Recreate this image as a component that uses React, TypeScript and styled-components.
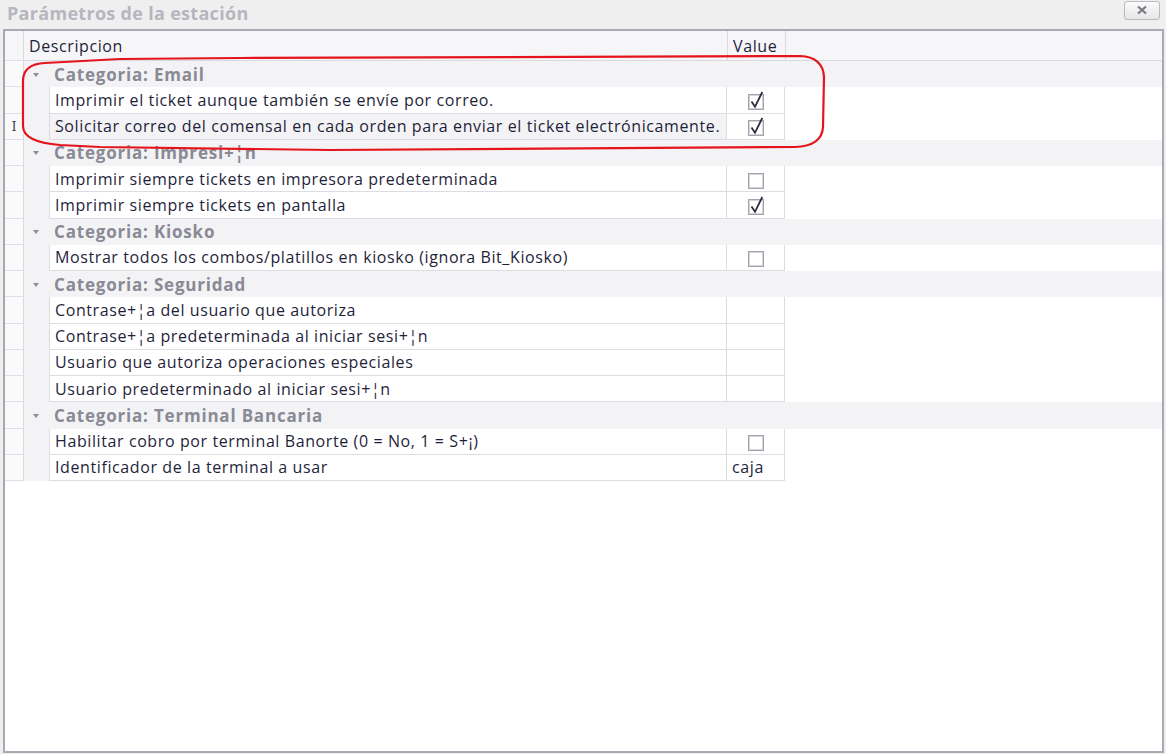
import React from "react";
import styled, { createGlobalStyle } from "styled-components";

const GlobalStyle = createGlobalStyle`
  html, body { margin: 0; padding: 0; }
  body {
    background: #f0f0f0;
    font-family: "Open Sans", "Noto Sans", sans-serif;
  }
`;

const Window = styled.div`
  width: 1166px;
  height: 754px;
  display: flex;
  flex-direction: column;
  background: #efeff0;
  box-sizing: border-box;
`;

const TitleBar = styled.div`
  height: 28px;
  flex: 0 0 28px;
  display: flex;
  align-items: center;
  justify-content: space-between;
  padding: 0 6px 0 7px;
`;

const Title = styled.div`
  font-weight: 700;
  font-size: 18px;
  color: #b6b6be;
  letter-spacing: 0.3px;
  margin-top: -3px;
`;

const CloseButton = styled.div`
  width: 34px;
  height: 17px;
  margin-top: -8px;
  border: 1px solid #b9b9c1;
  border-radius: 3px;
  background: linear-gradient(#fbfbfb, #e6e6e8);
  display: flex;
  align-items: center;
  justify-content: center;
`;

const Panel = styled.div`
  flex: 1;
  margin: 1px 2px 1px 3px;
  border: 2px solid #a9a9b5;
  background: #ffffff;
  position: relative;
  display: flex;
  flex-direction: column;
`;

const Row = styled.div<{ $h?: number }>`
  display: flex;
  height: ${(p) => p.$h ?? 26.25}px;
  flex: 0 0 auto;
`;

const Indicator = styled.div<{ $header?: boolean }>`
  width: 19px;
  flex: 0 0 19px;
  border-right: 1px solid #d9d9df;
  border-bottom: 1px solid #dfdfe4;
  background: ${(p) => (p.$header ? "#f6f6f8" : "#fafafb")};
  display: flex;
  align-items: center;
  justify-content: center;
  font-family: "DejaVu Serif", serif;
  font-size: 13px;
  color: #444;
  box-sizing: border-box;
`;

const HeaderCell = styled.div<{ $w?: number }>`
  width: ${(p) => (p.$w ? `${p.$w}px` : "auto")};
  flex: ${(p) => (p.$w ? `0 0 ${p.$w}px` : "1")};
  box-sizing: border-box;
  background: #f6f6f8;
  border-right: ${(p) => (p.$w ? "1px solid #d9d9df" : "none")};
  border-bottom: 1px solid #d9d9df;
  display: flex;
  align-items: center;
  padding-left: 5px;
  font-size: 16px;
  letter-spacing: 0.6px;
  color: #1f1f3a;
`;

const CategoryCell = styled.div`
  flex: 1;
  display: flex;
  align-items: center;
  background: #f3f3f5;
  padding-left: 9px;
  gap: 15px;
  font-weight: 700;
  font-size: 17px;
  letter-spacing: 0.8px;
  color: #8a8a95;
`;

const Caret = styled.span`
  width: 0;
  height: 0;
  border-left: 3.5px solid transparent;
  border-right: 3.5px solid transparent;
  border-top: 4px solid #8e8e98;
  margin-top: 1px;
`;

const Indent = styled.div`
  width: 25px;
  flex: 0 0 25px;
  background: #f3f3f5;
`;

const DescCell = styled.div<{ $focused?: boolean }>`
  width: 678px;
  flex: 0 0 678px;
  box-sizing: border-box;
  border-left: 1px solid #dcdce1;
  border-right: 1px solid #dcdce1;
  border-bottom: 1px solid #dcdce1;
  background: ${(p) => (p.$focused ? "#f3f3f5" : "#ffffff")};
  display: flex;
  align-items: center;
  padding-left: 5px;
  font-size: 16px;
  letter-spacing: 0.6px;
  color: #1f1f3a;
  white-space: nowrap;
  overflow: hidden;
`;

const ValueCell = styled.div<{ $text?: boolean }>`
  width: 58px;
  flex: 0 0 58px;
  box-sizing: border-box;
  border-right: 1px solid #dcdce1;
  border-bottom: 1px solid #dcdce1;
  background: #ffffff;
  display: flex;
  align-items: center;
  justify-content: ${(p) => (p.$text ? "flex-start" : "center")};
  padding-left: ${(p) => (p.$text ? "5px" : "0")};
  font-size: 16px;
  letter-spacing: 0.6px;
  color: #1f1f3a;
`;

const Filler = styled.div`
  flex: 1;
  background: #ffffff;
`;

const Annotation = styled.svg`
  position: absolute;
  left: -5px;
  top: -30px;
  pointer-events: none;
`;

const CheckBox: React.FC<{ checked: boolean }> = ({ checked }) => (
  <svg width="18" height="20" viewBox="0 0 18 20">
    <rect x="1.5" y="4.5" width="15" height="15" fill="#fff" stroke="#a3a3ad" />
    <rect x="2.5" y="5.5" width="13" height="13" fill="#fff" stroke="#d4d4da" />
    {checked && (
      <path d="M4.5 11.5 L8 16.8 L15.3 2" fill="none" stroke="#2d2d3f" strokeWidth="1.8" strokeLinejoin="miter" />
    )}
  </svg>
);

type Item = { label: string; value: string; focused?: boolean };
type Category = { name: string; items: Item[] };

const data: Category[] = [
  {
    name: "Categoria: Email",
    items: [
      { label: "Imprimir el ticket aunque también se envíe por correo.", value: "on" },
      {
        label: "Solicitar correo del comensal en cada orden para enviar el ticket electrónicamente.",
        value: "on",
        focused: true,
      },
    ],
  },
  {
    name: "Categoria: Impresi+¦n",
    items: [
      { label: "Imprimir siempre tickets en impresora predeterminada", value: "off" },
      { label: "Imprimir siempre tickets en pantalla", value: "on" },
    ],
  },
  {
    name: "Categoria: Kiosko",
    items: [{ label: "Mostrar todos los combos/platillos en kiosko (ignora Bit_Kiosko)", value: "off" }],
  },
  {
    name: "Categoria: Seguridad",
    items: [
      { label: "Contrase+¦a del usuario que autoriza", value: "" },
      { label: "Contrase+¦a predeterminada al iniciar sesi+¦n", value: "" },
      { label: "Usuario que autoriza operaciones especiales", value: "" },
      { label: "Usuario predeterminado al iniciar sesi+¦n", value: "" },
    ],
  },
  {
    name: "Categoria: Terminal Bancaria",
    items: [
      { label: "Habilitar cobro por terminal Banorte (0 = No, 1 = S+¡)", value: "off" },
      { label: "Identificador de la terminal a usar", value: "caja" },
    ],
  },
];

const renderValue = (v: string) => {
  if (v === "on") return <ValueCell><CheckBox checked /></ValueCell>;
  if (v === "off") return <ValueCell><CheckBox checked={false} /></ValueCell>;
  return <ValueCell $text>{v}</ValueCell>;
};

export default function App() {
  return (
    <>
      <GlobalStyle />
      <Window>
        <TitleBar>
          <Title>Parámetros de la estación</Title>
          <CloseButton>
            <svg width="12" height="10" viewBox="0 0 12 10">
              <path d="M2 1.5 L10 8.5 M10 1.5 L2 8.5" stroke="#7a7a84" strokeWidth="2.2" />
            </svg>
          </CloseButton>
        </TitleBar>
        <Panel>
          <Row $h={30}>
            <Indicator $header />
            <HeaderCell $w={704}>Descripcion</HeaderCell>
            <HeaderCell $w={58}>Value</HeaderCell>
            <HeaderCell />
          </Row>
          {data.map((cat) => (
            <React.Fragment key={cat.name}>
              <Row>
                <Indicator />
                <CategoryCell>
                  <Caret />
                  {cat.name}
                </CategoryCell>
              </Row>
              {cat.items.map((it) => (
                <Row key={it.label}>
                  <Indicator>{it.focused ? "I" : ""}</Indicator>
                  <Indent />
                  <DescCell $focused={it.focused}>{it.label}</DescCell>
                  {renderValue(it.value)}
                  <Filler />
                </Row>
              ))}
            </React.Fragment>
          ))}
          <Annotation width="900" height="200" viewBox="0 0 900 200">
            <path
              d="M23 80 Q23 63 45 62 L120 58 L240 57 L800 55 Q823 56 824 76 L823 126 Q822 145 795 146 L330 149 L100 146 L60 144 Q23 141 23 125 Z"
              fill="none"
              stroke="#e5141c"
              strokeWidth="2.2"
            />
          </Annotation>
        </Panel>
      </Window>
    </>
  );
}
